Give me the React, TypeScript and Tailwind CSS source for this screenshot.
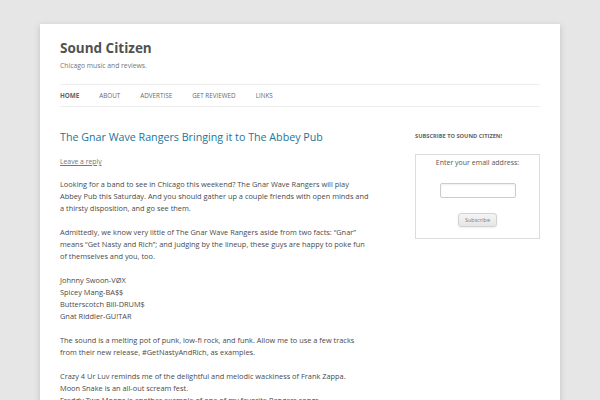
const NAV = ["Home", "About", "Advertise", "Get Reviewed", "Links"];

export default function App() {
  return (
    <div className="min-h-screen bg-[#e6e6e6] pt-[24px] font-['Open_Sans',sans-serif] text-[#444]">
      <div className="mx-[40px] w-[520px] bg-white px-[20px] pb-[40px] shadow-[0_2px_6px_rgba(100,100,100,0.3)]">
        {/* Header */}
        <header className="pt-[16px]">
          <h1 className="text-[13.5px] font-bold leading-[16px] text-[#515151]">Sound Citizen</h1>
          <p className="mt-[5px] text-[6.8px] leading-[10px] text-[#757575]">Chicago music and reviews.</p>
        </header>

        <nav className="mt-[13px] flex h-[23px] items-center border-y border-[#ededed]">
          {NAV.map((item, i) => (
            <a
              key={item}
              className={`mr-[20px] text-[6.3px] uppercase leading-[10px] ${
                i === 0 ? "font-bold text-[#636363]" : "text-[#6a6a6a]"
              }`}
            >
              {item}
            </a>
          ))}
        </nav>

        <div className="flex justify-between">
          {/* Main column */}
          <main className="w-[312px] pt-[22px]">
            <h2 className="text-[10.7px] leading-[16px] text-[#21759b]">
              The Gnar Wave Rangers Bringing it to The Abbey Pub
            </h2>
            <a className="mt-[11px] block text-[6.8px] leading-[12px] text-[#777] underline">Leave a reply</a>

            <div className="mt-[10px] text-[7.4px] leading-[12px] text-[#4a4a4a] [&>p]:mb-[12px] whitespace-nowrap">
              <p>
                Looking for a band to see in Chicago this weekend? The Gnar Wave Rangers will play
                <br />
                Abbey Pub this Saturday. And you should gather up a couple friends with open minds and
                <br />a thirsty disposition, and go see them.
              </p>
              <p>
                Admittedly, we know very little of The Gnar Wave Rangers aside from two facts: “Gnar”
                <br />
                means “Get Nasty and Rich”; and judging by the lineup, these guys are happy to poke fun
                <br />
                of themselves and you, too.
              </p>
              <p>
                Johnny Swoon-VØX
                <br />
                Spicey Mang-BA$$
                <br />
                Butterscotch Bill-DRUM$
                <br />
                Gnat Riddler-GU!TAR
              </p>
              <p>
                The sound is a melting pot of punk, low-fi rock, and funk. Allow me to use a few tracks
                <br />
                from their new release, #GetNastyAndRich, as examples.
              </p>
              <p>
                Crazy 4 Ur Luv reminds me of the delightful and melodic wackiness of Frank Zappa.
                <br />
                Moon Snake is an all-out scream fest.
                <br />
                Freddy Two Moons is another example of one of my favorite Rangers songs.
              </p>
            </div>
          </main>

          {/* Sidebar */}
          <aside className="w-[125px] pt-[23px]">
            <h3 className="text-[5.7px] font-bold uppercase leading-[12px] text-[#636363]">
              Subscribe to Sound Citizen!
            </h3>
            <div className="mt-[12px] flex h-[85px] flex-col items-center border border-[#dcdcdc] pt-[3px]">
              <p className="text-[7px] leading-[10px] text-[#555]">Enter your email address:</p>
              <input
                type="text"
                className="mt-[15px] h-[15px] w-[76px] rounded-[2px] border border-[#ccc] shadow-[inset_0_1px_2px_rgba(0,0,0,0.07)] outline-none"
              />
              <button className="mt-[15px] h-[14px] w-[39px] rounded-[3px] border border-[#d2d2d2] bg-gradient-to-b from-[#f4f4f4] to-[#e6e6e6] text-[5.5px] text-[#7c7c7c] shadow-[0_1px_2px_rgba(64,64,64,0.1)]">
                Subscribe
              </button>
            </div>
          </aside>
        </div>
      </div>
    </div>
  );
}
